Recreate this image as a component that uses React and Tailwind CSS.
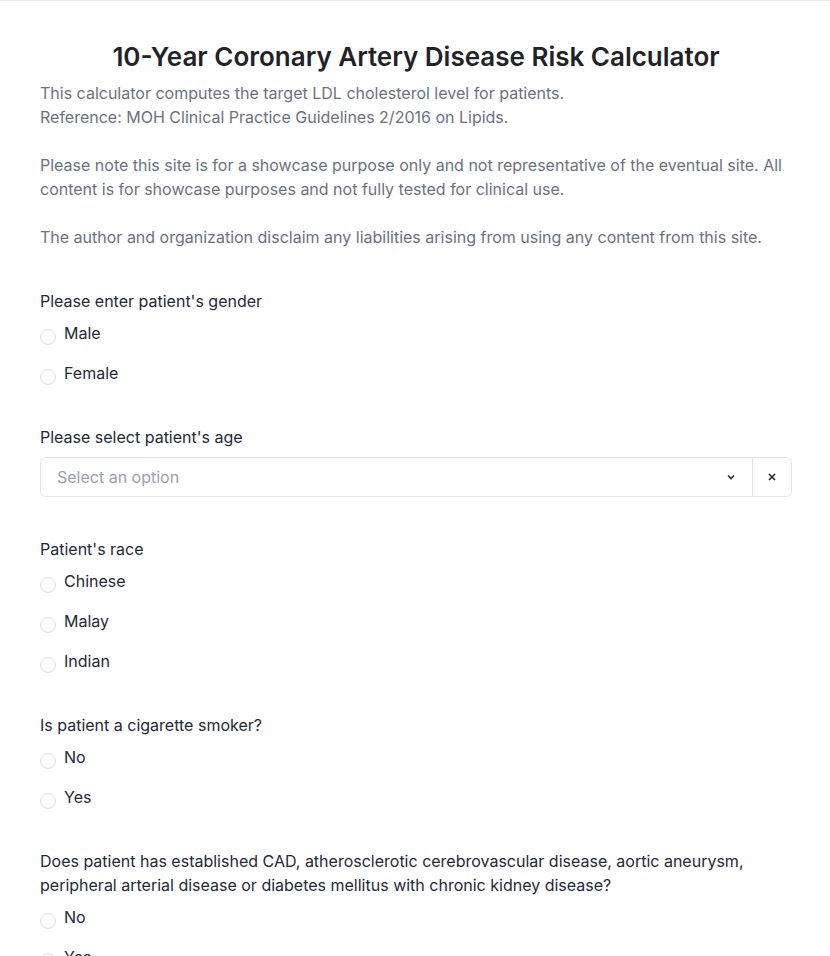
import React from 'react';

const RadioGroup = ({ label, name, options }) => (
  <div className="mt-10">
    <p className="text-base leading-6 text-gray-800">{label}</p>
    <div className="mt-2 flex flex-col gap-4">
      {options.map((opt) => (
        <label key={opt} className="flex items-start gap-2 text-base leading-6 text-gray-800">
          <span className="mt-2 h-4 w-4 shrink-0 rounded-full border border-[#dcdfe4] bg-white" />
          <span>{opt}</span>
        </label>
      ))}
    </div>
  </div>
);

export default function App() {
  return (
    <div className="min-h-screen border-t border-[#ececec] bg-white pl-10 font-['Inter',sans-serif]">
      <div className="w-[752px] pt-10">
        <h1 className="text-center text-[26px] font-semibold leading-8 text-[#1f2328]">
          10-Year Coronary Artery Disease Risk Calculator
        </h1>
        <div className="mt-2 text-base leading-6 text-gray-500">
          <p>This calculator computes the target LDL cholesterol level for patients.</p>
          <p>Reference: MOH Clinical Practice Guidelines 2/2016 on Lipids.</p>
          <p className="mt-6">
            Please note this site is for a showcase purpose only and not representative of the eventual site. All
            content is for showcase purposes and not fully tested for clinical use.
          </p>
          <p className="mt-6">
            The author and organization disclaim any liabilities arising from using any content from this site.
          </p>
        </div>

        <RadioGroup label="Please enter patient's gender" name="gender" options={['Male', 'Female']} />

        <div className="mt-10">
          <p className="text-base leading-6 text-gray-800">Please select patient's age</p>
          <div className="mt-2 flex h-10 items-stretch rounded-md border border-[#e3e5e8] bg-white">
            <div className="flex flex-1 items-center justify-between pl-4 pr-4">
              <span className="text-base text-gray-400">Select an option</span>
              <svg width="10" height="10" viewBox="0 0 10 10" className="text-gray-800">
                <path d="M2 3.5 L5 6.5 L8 3.5" fill="none" stroke="currentColor" strokeWidth="1.6" />
              </svg>
            </div>
            <div className="flex w-[39px] items-center justify-center border-l border-[#e3e5e8]">
              <svg width="10" height="10" viewBox="0 0 10 10" className="text-gray-800">
                <path d="M2 2 L8 8 M8 2 L2 8" fill="none" stroke="currentColor" strokeWidth="1.6" />
              </svg>
            </div>
          </div>
        </div>

        <RadioGroup label="Patient's race" name="race" options={['Chinese', 'Malay', 'Indian']} />
        <RadioGroup label="Is patient a cigarette smoker?" name="smoker" options={['No', 'Yes']} />
        <RadioGroup
          label="Does patient has established CAD, atherosclerotic cerebrovascular disease, aortic aneurysm, peripheral arterial disease or diabetes mellitus with chronic kidney disease?"
          name="cad"
          options={['No', 'Yes']}
        />
        <div className="h-10" />
      </div>
    </div>
  );
}
